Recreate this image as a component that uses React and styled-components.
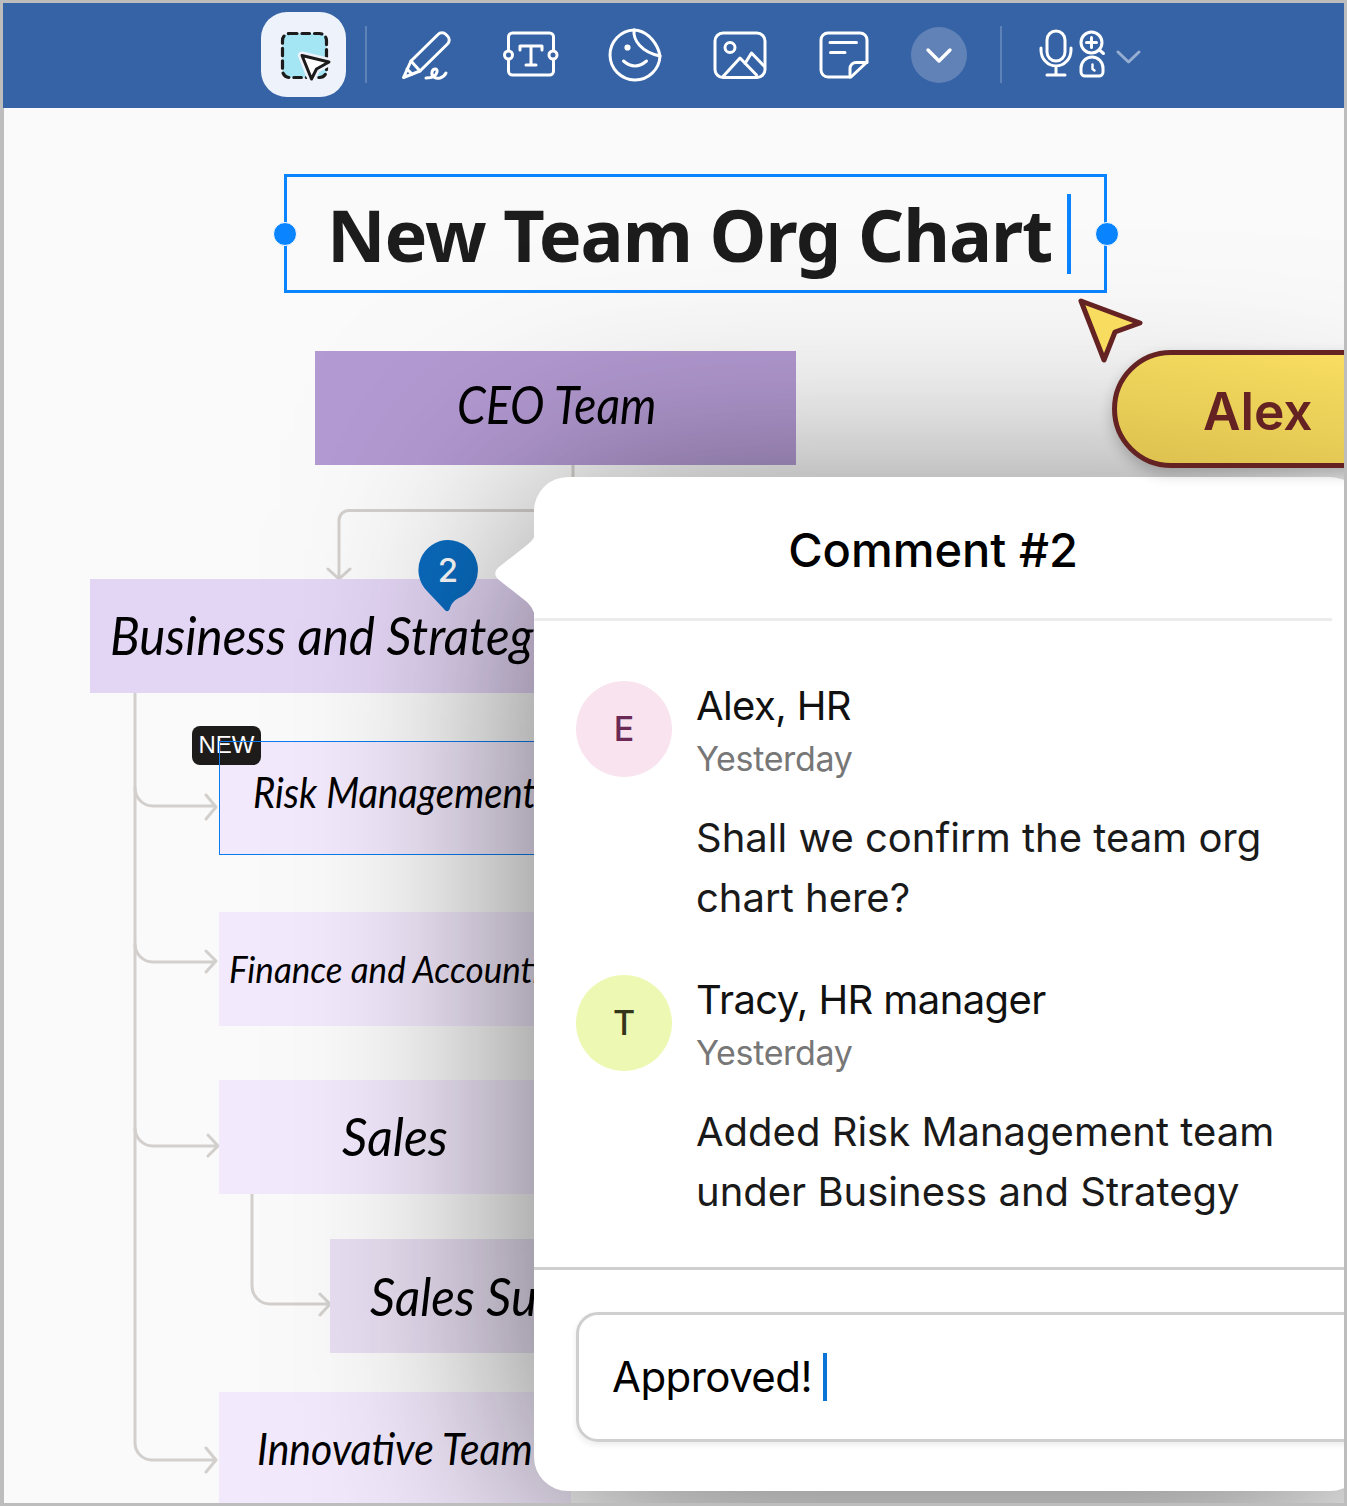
import React from 'react';
import styled, { createGlobalStyle } from 'styled-components';

const Global = createGlobalStyle`
  html, body { margin: 0; padding: 0; background: #bdbdbd; }
  * { box-sizing: border-box; }
`;

const HAND = `"Lato", "Open Sans", sans-serif`;
const UI = `"Inter", "Noto Sans", sans-serif`;

const Frame = styled.div`
  width: 1347px; height: 1506px; border: 3px solid #bdbdbd;
  display: flex; flex-direction: column; overflow: hidden; background: #fafafa;
`;
const Toolbar = styled.div`
  height: 105px; flex: none; background: #3563a5; display: flex; align-items: center;
  padding: 0 0 2px 258px; position: relative; z-index: 3;
`;
const SelectBtn = styled.div`
  width: 85px; height: 85px; border-radius: 26px; background: #eef2fb;
  display: flex; align-items: center; justify-content: center; margin-right: 19px;
`;
const Sep = styled.div`
  width: 2px; height: 57px; background: rgba(255,255,255,.2); flex: none;
`;
const Tools = styled.div`
  display: flex; align-items: center; gap: 44.5px; margin: 0 37px 0 29px;
`;
const Svg = styled.svg`
  width: ${p => p.$w || 60}px; height: 60px; flex: none; display: block;
  fill: none; stroke: #fff; stroke-width: 3; stroke-linecap: round; stroke-linejoin: round;
`;
const RoundBtn = styled.div`
  width: 56px; height: 56px; border-radius: 50%; background: #6082b7;
  display: flex; align-items: center; justify-content: center; margin-right: 33px;
`;
const MicGroup = styled.div`
  display: flex; align-items: center; margin-left: 36px;
`;

const Canvas = styled.div`
  position: relative; flex: 1; overflow: hidden; background: #fafafa;
`;
const CanvasEdge = styled.div`
  position: absolute; left: 0; top: 0; bottom: 0; width: 1px; background: #bdbdbd; z-index: 2;
`;
const Connectors = styled.svg`
  position: absolute; left: 0; top: 0; width: 1341px; height: 1395px;
  fill: none; stroke: #d2cfcd; stroke-width: 3; stroke-linecap: round; stroke-linejoin: round;
`;
const TitleBox = styled.div`
  position: absolute; left: 281px; top: 66px; width: 823px; height: 119px;
  border: 3px solid #0a84ff; display: flex; align-items: center; padding-left: 40px;
`;
const TitleText = styled.h1`
  margin: 0; font: 700 72px/1 "Noto Sans", sans-serif; color: #1c1c1c; letter-spacing: -1.05px;
`;
const TitleCaret = styled.span`
  width: 4px; height: 80px; background: #0a84ff; margin-left: 15px; flex: none;
`;
const Handle = styled.span`
  position: absolute; top: 45px; width: 24px; height: 24px; border-radius: 50%; background: #0a84ff;
  border: 1px solid #fff; ${p => p.$side}: ${p => (p.$side === 'right' ? -15 : -14)}px;
`;
const Node = styled.div`
  position: absolute; left: ${p => p.$x - 3}px; top: ${p => p.$y - 108}px;
  width: ${p => p.$w}px; height: 114px; background: ${p => p.$bg};
  border: ${p => (p.$selected ? '1px solid #0a7bf0' : 'none')};
  display: flex; align-items: center; padding-left: ${p => p.$pad}px; white-space: nowrap;
`;
const NodeText = styled.span`
  font-family: ${HAND}; font-style: italic; font-weight: 400; color: #000;
  font-size: ${p => p.$size}px;
  display: inline-block; transform: translateY(${p => p.$dy || 0}px) scaleX(${p => p.$sx || 1}); transform-origin: left center;
`;
const NewBadge = styled.div`
  position: absolute; left: 189px; top: 618px; width: 69px; height: 39px; border-radius: 8px;
  background: #1e1c1b; color: #fff; font: 400 24px/37px "Liberation Sans", sans-serif; text-align: center;
`;
const RiskLine = styled.div`
  position: absolute; left: 216px; top: 633px; width: 42px; height: 24px;
  border-left: 1px solid #0a7bf0; border-top: 1px solid #0a7bf0;
`;
const Pin = styled.div`
  position: absolute; left: 415px; top: 432px; width: 60px; height: 72px;
`;
const PinSvg = styled.svg`
  position: absolute; inset: 0; width: 60px; height: 72px;
`;
const PinNum = styled.span`
  position: absolute; left: 0; top: 12px; width: 60px; text-align: center; color: #fff;
  font: 500 33px/36px ${UI};
`;
const Arrow = styled.svg`
  position: absolute; left: 1074px; top: 186px; width: 70px; height: 72px; z-index: 1;
`;
const Pill = styled.div`
  position: absolute; left: 1109px; top: 242px; width: 320px; height: 118px; border-radius: 59px;
  border: 5px solid #652222; background: linear-gradient(190deg, #fbe063 0%, #dcc14f 100%);
  box-shadow: 0 6px 14px rgba(0,0,0,.22); z-index: 1;
  color: #652222; font: 600 51.5px/112px ${UI}; padding-left: 86px;
`;
const Panel = styled.div`
  position: absolute; left: 531px; top: 369px; width: 830px; height: 1014px;
  background: #fff; border-radius: 34px;
  box-shadow: 0 28px 230px rgba(0,0,0,.56);
  display: flex; flex-direction: column;
`;
const Tail = styled.svg`
  position: absolute; left: -42px; top: 44px; width: 44px; height: 110px; fill: #fff;
`;
const PanelHeader = styled.div`
  height: 144px; width: 798px; border-bottom: 3px solid #ececec; flex: none;
  display: flex; align-items: center; justify-content: center;
  font: 500 47px/1 ${UI}; color: #000; padding-top: 3px;
`;
const Thread = styled.div`
  flex: none; height: 649px; padding: 60px 0 0 42px; border-bottom: 3px solid #cfcfcf;
  display: flex; flex-direction: column;
`;
const Message = styled.div`
  display: flex; gap: 25px; height: 294px; flex: none;
`;
const Avatar = styled.div`
  width: 96px; height: 96px; border-radius: 50%; flex: none; background: ${p => p.$bg}; color: ${p => p.$fg};
  display: flex; align-items: center; justify-content: center; font: 500 34px/1 ${UI};
`;
const MsgBody = styled.div`
  display: flex; flex-direction: column; margin-left: -1px;
`;
const Author = styled.div`
  font: 400 40px/50px ${UI}; color: #111; letter-spacing: -.6px;
`;
const When = styled.div`
  font: 400 34px/56px ${UI}; color: #777; letter-spacing: -.35px;
`;
const Body = styled.div`
  font: 400 40px/60px ${UI}; color: #1a1a1a; margin-top: 21px; width: 600px; letter-spacing: 0;
`;
const Composer = styled.div`
  flex: none; padding: 42px 0 0 42px;
`;
const InputBox = styled.div`
  width: 800px; height: 130px; border: 3px solid #cfcfcf; border-radius: 22px;
  box-shadow: 0 3px 6px rgba(0,0,0,.08);
  display: flex; align-items: center; padding-left: 33px;
  font: 400 42px/1 ${UI}; color: #000; letter-spacing: -.55px;
`;
const InputCaret = styled.span`
  width: 4px; height: 48px; background: #0b74d6; margin-left: 11px;
`;

export default function App() {
  return (
    <>
      <Global />
      <Frame>
        <Toolbar>
          <SelectBtn>
            <Svg viewBox="0 0 60 60" style={{ stroke: '#1c1c1c' }}>
              <rect x="8.5" y="8.5" width="44" height="44" rx="7" fill="#a5e6f5" strokeDasharray="7.5 5" strokeWidth="3.2" />
              <path d="M28 30.5L55 37L42.5 44L37.5 54Z" fill="#fff" stroke="#eef2fb" strokeWidth="8" />
              <path d="M28 30.5L55 37L42.5 44L37.5 54Z" fill="#fff" strokeWidth="3" />
            </Svg>
          </SelectBtn>
          <Sep />
          <Tools>
            <Svg viewBox="0 0 60 60">
              <path d="M7.5 52.5L15 36L42 9.5a5.5 5.5 0 0 1 8 0l1.5 1.5a5.5 5.5 0 0 1 0 8L24 46Z" />
              <path d="M15 36L24 46M11 44l5 5" />
              <path d="M30 53C36 53 40 52 41 47C42 43 37 43 36 47C35 52 40 54 44 53C47 52 49 50 50 48" />
            </Svg>
            <Svg viewBox="0 0 60 60">
              <rect x="7.5" y="8" width="45" height="42" rx="4" />
              <circle cx="7.5" cy="30" r="4" fill="#3563a5" />
              <circle cx="52" cy="30" r="4" fill="#3563a5" />
              <path d="M19 25v-4h22v4M30 21v19M25 40h10" />
            </Svg>
            <Svg viewBox="0 0 60 60">
              <path d="M29 5A25 25 0 1 0 55 31" />
              <path d="M29 5L33 5.5C44 8 53 19 55 31C36 27 28 15 29 5Z" />
              <circle cx="22.5" cy="22.5" r="1.6" fill="#fff" />
              <path d="M18.5 36Q30 46 41.5 36" />
            </Svg>
            <Svg viewBox="0 0 60 60">
              <rect x="5" y="8" width="50" height="44.5" rx="8" />
              <circle cx="20" cy="22.5" r="5" />
              <path d="M13.5 51L30 33L46.5 50M35 38.5L41.5 28L54 41" />
            </Svg>
            <Svg viewBox="0 0 60 60">
              <path d="M14 8H46a7 7 0 0 1 7 7V37L37 52H14a7 7 0 0 1 -7 -7V15a7 7 0 0 1 7 -7Z" />
              <path d="M53 37.5H42a6 6 0 0 0 -6 6V52M16 17.5H42.5M16.5 27.5H31" />
            </Svg>
          </Tools>
          <RoundBtn>
            <Svg viewBox="0 0 60 60" $w={60} style={{ margin: '-2px' }}>
              <path d="M19 25L30 36L41 25" strokeWidth="3.4" />
            </Svg>
          </RoundBtn>
          <Sep />
          <MicGroup>
            <Svg viewBox="0 0 70 60" $w={70}>
              <rect x="9" y="6" width="18" height="30" rx="9" />
              <path d="M3 23v2a15 16 0 0 0 30 0v-2M18 41v9M9 50H27" />
              <circle cx="53.5" cy="17.5" r="10.5" />
              <path d="M53.5 12.5v10M48.5 17.5h10M61.5 25L65.5 28.5" />
              <path d="M43 47V43a11 11 0 0 1 22 0v4a4 4 0 0 1 -4 4H47a4 4 0 0 1 -4 -4Z" />
              <path d="M54.5 39.5V44L56.5 45.5" strokeWidth="2.4" />
            </Svg>
            <Svg viewBox="0 0 30 60" $w={30} style={{ stroke: '#96aed2', marginLeft: '5px' }}>
              <path d="M5 27L15.5 37L26 27" />
            </Svg>
          </MicGroup>
        </Toolbar>
        <Canvas>
          <CanvasEdge />
          <TitleBox>
            <TitleText>New Team Org Chart</TitleText>
            <TitleCaret />
            <Handle $side="left" />
            <Handle $side="right" />
          </TitleBox>

          <Connectors viewBox="0 0 1341 1395">
            <path d="M570 357V402.5H346a10 10 0 0 0 -10 10V470M325 461L336 471L347 461" />
            <path d="M132 585V1335a17 17 0 0 0 17 17H212M203 1340L213 1352L203 1364" />
            <path d="M132 680a18 18 0 0 0 18 18H212M203 687L213 699L203 711" />
            <path d="M132 836a18 18 0 0 0 18 18H212M203 843L213 853L203 864" />
            <path d="M132 1020a18 18 0 0 0 18 18H214M205 1027L215 1038L205 1048" />
            <path d="M249 1086V1178a18 18 0 0 0 18 18H325M317 1186L327 1196L317 1207" />
          </Connectors>

          <Node $x={315} $y={351} $w={481} $bg="#b39ad2" $pad={142}><NodeText $size={52} $sx={.89} $dy={-4}>CEO Team</NodeText></Node>
          <Node $x={90} $y={579} $w={481} $bg="#e3d5f4" $pad={20}><NodeText $size={52} $sx={.95} $dy={-1}>Business and Strategy</NodeText></Node>
          <Node $x={219} $y={741} $w={352} $bg="#f2e9fc" $selected $pad={33}><NodeText $size={42} $sx={.91} $dy={-6}>Risk Management</NodeText></Node>
          <Node $x={219} $y={912} $w={352} $bg="#f2e9fc" $pad={10}><NodeText $size={37} $sx={.945} $dy={-1}>Finance and Accounting</NodeText></Node>
          <Node $x={219} $y={1080} $w={352} $bg="#f2e9fc" $pad={123}><NodeText $size={52} $sx={.96} $dy={-1}>Sales</NodeText></Node>
          <Node $x={330} $y={1239} $w={241} $bg="#e8dff2" $pad={40}><NodeText $size={52} $sx={.95}>Sales Support</NodeText></Node>
          <Node $x={219} $y={1392} $w={352} $bg="#f2e9fc" $pad={38}><NodeText $size={45} $sx={.91} $dy={-1}>Innovative Team</NodeText></Node>

          <NewBadge>NEW</NewBadge>
          <RiskLine />

          <Pin>
            <PinSvg viewBox="0 0 60 72">
              <path d="M30 0a30 30 0 0 1 13 57c-5 2 -9 5 -11 11c-1 4 -4 4 -6 1L9 51A30 30 0 0 1 30 0Z" fill="#0a6cc0" />
            </PinSvg>
            <PinNum>2</PinNum>
          </Pin>

          <Arrow viewBox="0 0 70 72">
            <path d="M4 7L63 29L38 38L27 66Z" fill="#f8dc5f" stroke="#652222" strokeWidth="5" strokeLinejoin="round" />
          </Arrow>
          <Pill>Alex</Pill>

          <Panel>
            <Tail viewBox="0 0 44 110">
              <path d="M44 8C44 16 40 20 35 24L7 46C2 50 2 55 7 59L35 81C40 86 43 92 44 100Z" />
            </Tail>
            <PanelHeader>Comment #2</PanelHeader>
            <Thread>
              <Message>
                <Avatar $bg="#f8e3ef" $fg="#6b2a55">E</Avatar>
                <MsgBody>
                  <Author>Alex, HR</Author>
                  <When>Yesterday</When>
                  <Body>Shall we confirm the team org chart here?</Body>
                </MsgBody>
              </Message>
              <Message>
                <Avatar $bg="#edf9b2" $fg="#33361a">T</Avatar>
                <MsgBody>
                  <Author>Tracy, HR manager</Author>
                  <When>Yesterday</When>
                  <Body>Added Risk Management team under Business and Strategy</Body>
                </MsgBody>
              </Message>
            </Thread>
            <Composer>
              <InputBox>Approved!<InputCaret /></InputBox>
            </Composer>
          </Panel>
        </Canvas>
      </Frame>
    </>
  );
}
